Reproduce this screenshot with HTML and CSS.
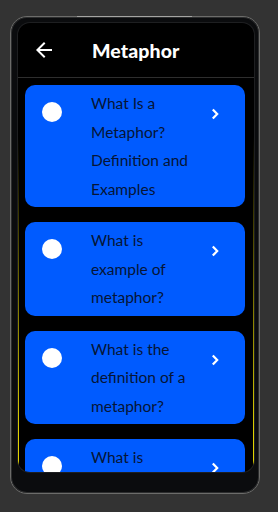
FILE: index.html
```html
<!DOCTYPE html>
<html lang="en">

<head>
    <meta charset="UTF-8">
    <meta name="viewport" content="width=device-width, initial-scale=1.0">
    <title>Metaphor</title>
    <link rel="stylesheet" href="styles.css">
</head>

<body>
    <div class="phone">
        <div class="screen">
            <header class="app_bar">
                <svg class="back" width="24" height="24" viewBox="0 0 24 24">
                    <path d="M20 11H7.83l5.59-5.59L12 4l-8 8 8 8 1.41-1.41L7.83 13H20v-2z" fill="#fff" />
                </svg>
                <h1 class="title">Metaphor</h1>
            </header>
            <div class="list">
                <div class="card">
                    <span class="dot"></span>
                    <p class="card_text">What Is a Metaphor? Definition and Examples</p>
                    <svg class="chevron" width="8" height="12" viewBox="0 0 8 12">
                        <polyline points="1.8,1.4 6.2,6 1.8,10.6" />
                    </svg>
                </div>
                <div class="card">
                    <span class="dot"></span>
                    <p class="card_text">What is example of metaphor?</p>
                    <svg class="chevron" width="8" height="12" viewBox="0 0 8 12">
                        <polyline points="1.8,1.4 6.2,6 1.8,10.6" />
                    </svg>
                </div>
                <div class="card">
                    <span class="dot"></span>
                    <p class="card_text">What is the definition of a metaphor?</p>
                    <svg class="chevron" width="8" height="12" viewBox="0 0 8 12">
                        <polyline points="1.8,1.4 6.2,6 1.8,10.6" />
                    </svg>
                </div>
                <div class="card">
                    <span class="dot"></span>
                    <p class="card_text">What is metaphor in literature?</p>
                    <svg class="chevron" width="8" height="12" viewBox="0 0 8 12">
                        <polyline points="1.8,1.4 6.2,6 1.8,10.6" />
                    </svg>
                </div>
            </div>
        </div>
    </div>
</body>

</html>
```

FILE: styles.css
```css
html,
body {
    margin: 0;
    height: 100%;
    background: #333333;
    font-family: Lato, "Open Sans", sans-serif;
}

.phone {
    position: relative;
    box-sizing: border-box;
    width: 250px;
    height: 478px;
    margin: 16px 0 0 10px;
    padding: 6px 5px 21px 7px;
    border: 1px solid #6c6c6a;
    border-radius: 17px;
    background: #0b0c0e;
    box-shadow: inset 0 0 0 1px #2c2d2e;
}

/* speaker highlight on the top edge */
.phone::before {
    content: "";
    position: absolute;
    top: -1px;
    left: 66px;
    width: 115px;
    height: 1px;
    background: #a4a4a2;
}

.screen {
    height: 100%;
    display: flex;
    flex-direction: column;
    border-radius: 12px;
    background: #000;
    overflow: hidden;
    box-shadow: 0 0 0 1px #1e1f21;
}

.app_bar {
    flex: none;
    height: 54px;
    display: flex;
    align-items: center;
    padding-left: 14px;
    border-bottom: 1px solid #2e2e2e;
}

.back {
    flex: none;
}

.title {
    margin: 0 0 0 36px;
    color: #fff;
    font-size: 19.5px;
    font-weight: 900;
    letter-spacing: 0.1px;
}

.list {
    flex: 1;
    min-height: 0;
    overflow: hidden;
    padding: 7px 6px 0 6px;
    border-style: solid;
    border-width: 0 1px;
    border-image: linear-gradient(to bottom, rgba(200, 190, 0, 0) 15%, #e0d200 90%) 1;
}

.card {
    display: flex;
    align-items: flex-start;
    flex: none;
    width: 220px;
    box-sizing: border-box;
    padding: 4px 0;
    margin-bottom: 15px;
    border-radius: 10px;
    background: #005bff;
}

.dot {
    flex: none;
    width: 20px;
    height: 20px;
    margin: 13px 0 0 17px;
    border-radius: 50%;
    background: #fff;
}

.card_text {
    width: 100px;
    margin: 0 0 0 29px;
    color: #061536;
    font-size: 15.5px;
    line-height: 28.5px;
}

.chevron {
    flex: none;
    margin: 19px 0 0 auto;
    margin-right: 26px;
    fill: none;
    stroke: #fff;
    stroke-width: 2.2;
}
```
